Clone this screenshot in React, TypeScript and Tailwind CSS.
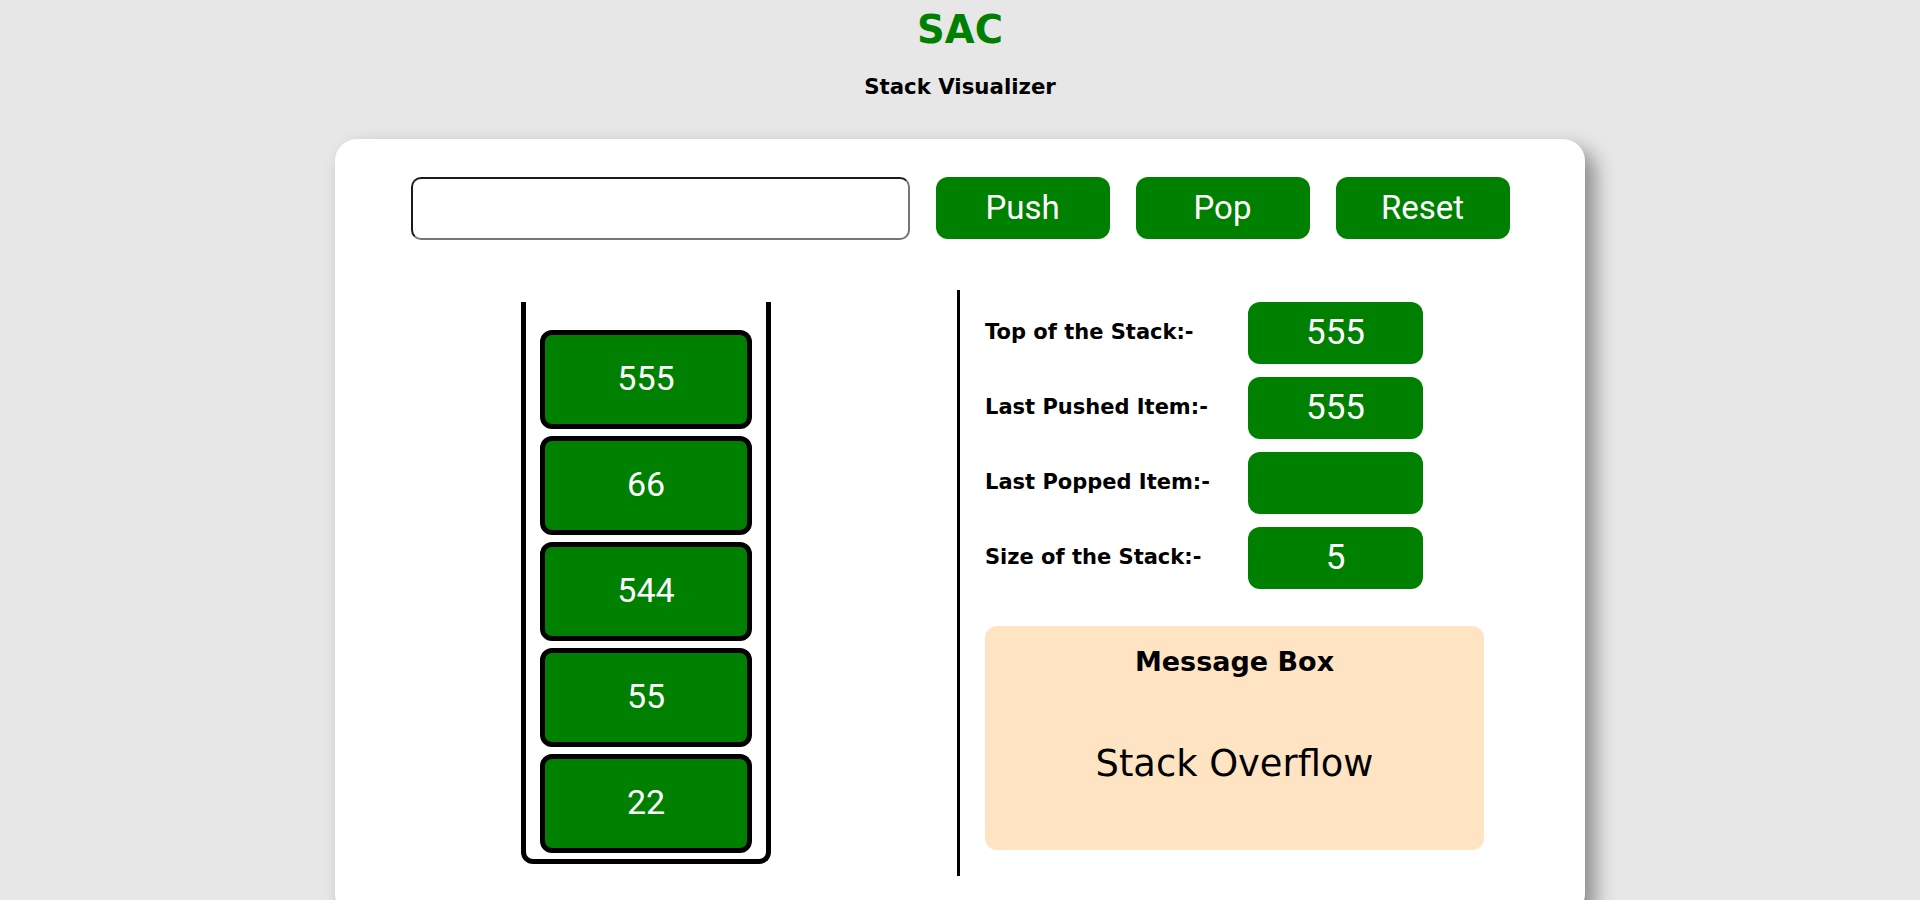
import React from 'react'

const stackItems = ['555', '66', '544', '55', '22']

const stats: [string, string][] = [
  ['Top of the Stack:-', '555'],
  ['Last Pushed Item:-', '555'],
  ['Last Popped Item:-', ''],
  ['Size of the Stack:-', '5'],
]

const btn =
  "w-[174px] h-[62px] rounded-[12px] bg-[#008000] text-white text-[33px] font-['Roboto',sans-serif] flex items-center justify-center"

export default function App() {
  return (
    <div className="min-h-screen bg-[#e7e7e7] font-['DejaVu_Sans',sans-serif] text-black overflow-hidden">
      <h1 className="pt-[8px] text-center text-[38.5px] leading-[44px] font-bold text-[#008000]">SAC</h1>
      <h3 className="mt-[21px] text-center text-[21.3px] leading-[28px] font-bold">Stack Visualizer</h3>

      <div className="mx-auto mt-[38px] w-[1250px] rounded-[22px] bg-white pt-[38px] pb-[40px] shadow-[10px_10px_20px_rgba(0,0,0,0.4)]">
        {/* controls */}
        <div className="flex justify-center gap-[26px]">
          <input
            type="text"
            className="w-[499px] h-[63px] rounded-[10px] border-2 border-t-[#1a1a1a] border-l-[#1a1a1a] border-r-[#767676] border-b-[#767676] bg-white px-3 text-[24px] outline-none"
          />
          <button className={btn}>Push</button>
          <button className={btn}>Pop</button>
          <button className={btn}>Reset</button>
        </div>

        <div className="mt-[50px] flex items-start">
          {/* stack */}
          <div className="w-[622px] flex justify-center pt-[12px]">
            <div className="w-[250px] h-[562px] border-x-[5px] border-b-[5px] border-black rounded-b-[12px] flex flex-col justify-end gap-[7px] px-[14px] pb-[6px]">
              {stackItems.map((v, i) => (
                <div
                  key={i}
                  className="h-[99px] rounded-[12px] border-[5px] border-black bg-[#008000] text-white text-[34px] leading-none pb-[4px] font-['Roboto',sans-serif] flex items-center justify-center"
                >
                  {v}
                </div>
              ))}
            </div>
          </div>

          {/* info */}
          <div className="flex-1 border-l-[3px] border-black pl-[25px] pt-[12px] pb-[26px]">
            <div className="flex flex-col gap-[13px]">
              {stats.map(([label, value]) => (
                <div key={label} className="flex items-center">
                  <div className="w-[263px] text-[21px] font-bold">{label}</div>
                  <div className="w-[175px] h-[62px] rounded-[12px] bg-[#008000] text-white text-[35px] leading-none pb-[2px] font-['Roboto',sans-serif] flex items-center justify-center">
                    {value}
                  </div>
                </div>
              ))}
            </div>

            <div className="mt-[37px] w-[499px] h-[224px] rounded-[12px] bg-[#ffe4c4] flex flex-col items-center pt-[20px]">
              <div className="text-[27px] leading-[32px] font-bold">Message Box</div>
              <div className="flex-1 flex items-center text-[36.8px]">Stack Overflow</div>
            </div>
          </div>
        </div>
      </div>
    </div>
  )
}
